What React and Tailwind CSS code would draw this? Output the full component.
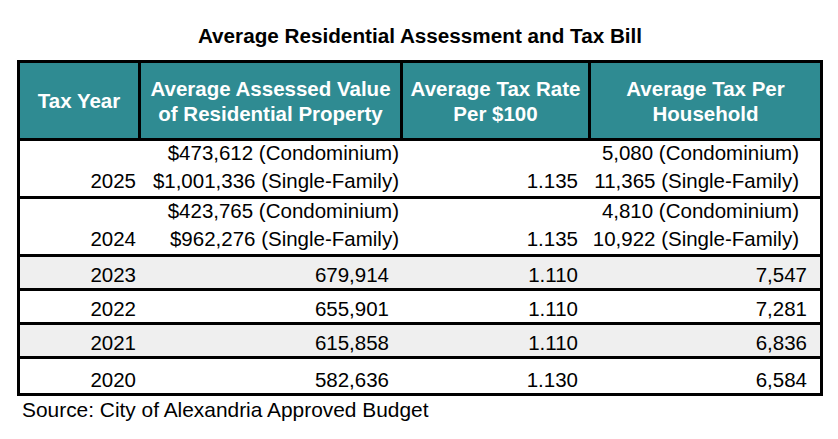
import React from "react";

const rows = [
  {
    year: "2025",
    value: ["$473,612 (Condominium)", "$1,001,336 (Single-Family)"],
    rate: "1.135",
    tax: ["5,080 (Condominium)", "11,365 (Single-Family)"],
  },
  {
    year: "2024",
    value: ["$423,765 (Condominium)", "$962,276 (Single-Family)"],
    rate: "1.135",
    tax: ["4,810 (Condominium)", "10,922 (Single-Family)"],
  },
  { year: "2023", value: "679,914", rate: "1.110", tax: "7,547", gray: true },
  { year: "2022", value: "655,901", rate: "1.110", tax: "7,281" },
  { year: "2021", value: "615,858", rate: "1.110", tax: "6,836", gray: true },
  { year: "2020", value: "582,636", rate: "1.130", tax: "6,584" },
];

export default function App() {
  return (
    <div
      className="w-[838px] h-[439px] bg-white text-black text-[20.5px]"
      style={{ fontFamily: '"Liberation Sans", Arial, sans-serif' }}
    >
      <div className="ml-[17px] w-[806px] pt-[24px] text-center font-bold leading-[24px] text-[20.7px]">
        Average Residential Assessment and Tax Bill
      </div>

      <div className="ml-[17px] mt-[12px] w-[806px] border-[3px] border-black">
        {/* header */}
        <div className="flex h-[78px] bg-[#2f8b92] text-white font-bold leading-[25px] text-center border-b-[3px] border-black">
          <div className="w-[121px] border-r-[3px] border-black flex items-center justify-center">
            Tax Year
          </div>
          <div className="w-[262px] border-r-[3px] border-black flex items-center justify-center">
            Average Assessed Value
            <br />
            of Residential Property
          </div>
          <div className="w-[188px] border-r-[3px] border-black flex items-center justify-center">
            Average Tax Rate
            <br />
            Per $100
          </div>
          <div className="flex-1 flex items-center justify-center">
            Average Tax Per
            <br />
            Household
          </div>
        </div>

        {/* body */}
        {rows.map((row, i) => {
          const multi = Array.isArray(row.value);
          const last = i === rows.length - 1;
          return (
            <div
              key={row.year}
              className={
                "flex items-end text-right " +
                (multi ? "h-[58px] pb-[1px] leading-[28px] " : "h-[34px] leading-[27px] ") +
                (i === 2 ? "h-[33px] " : "") +
                (last ? "" : "border-b-[3px] border-black ") +
                (row.gray ? "bg-[#efefef]" : "bg-white")
              }
            >
              <div className="w-[121px] pr-[5px]">{row.year}</div>
              <div className={multi ? "w-[262px] pr-[4px]" : "w-[262px] pr-[14px]"}>
                {multi ? (
                  <>
                    <div>{row.value[0]}</div>
                    <div>{row.value[1]}</div>
                  </>
                ) : (
                  row.value
                )}
              </div>
              <div className="w-[188px] pr-[13px]">{row.rate}</div>
              <div className={multi ? "flex-1 pr-[21px]" : "flex-1 pr-[13px]"}>
                {multi ? (
                  <>
                    <div>{row.tax[0]}</div>
                    <div>{row.tax[1]}</div>
                  </>
                ) : (
                  row.tax
                )}
              </div>
            </div>
          );
        })}
      </div>

      <div className="ml-[22px] mt-[2px] leading-[24px] text-[20.9px]">
        Source: City of Alexandria Approved Budget
      </div>
    </div>
  );
}
